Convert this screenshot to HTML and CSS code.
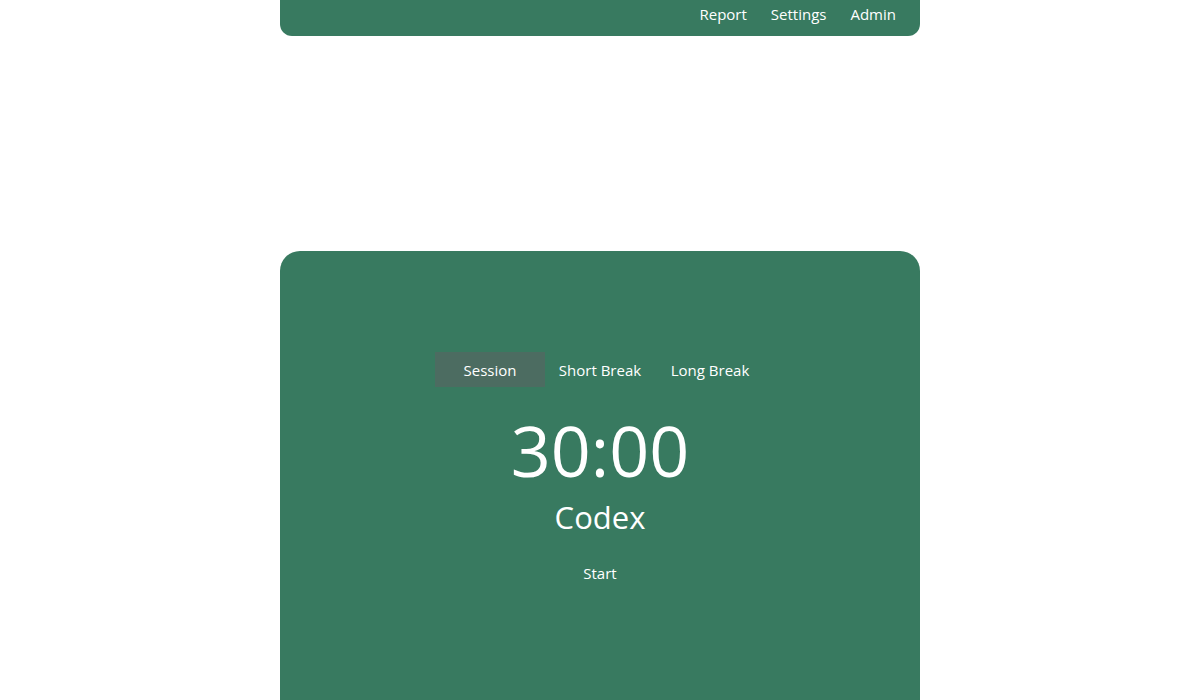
FILE: index.html
```html
<!DOCTYPE html>
<html lang="en">
<head>
<meta charset="utf-8">
<title>Pomodoro</title>
<link rel="stylesheet" href="styles.css">
</head>
<body>
<header class="nav">
  <a class="nav-link" href="#">Report</a>
  <a class="nav-link" href="#">Settings</a>
  <a class="nav-link" href="#">Admin</a>
</header>
<main class="card">
  <div class="tabs">
    <button class="tab active">Session</button>
    <button class="tab">Short Break</button>
    <button class="tab">Long Break</button>
  </div>
  <div class="time">30:00</div>
  <div class="task">Codex</div>
  <button class="start">Start</button>
</main>
</body>
</html>
```
FILE: styles.css
```css
html, body {
  margin: 0;
  padding: 0;
  background: #ffffff;
  font-family: "Open Sans", "Noto Sans", sans-serif;
  color: #ffffff;
  overflow: hidden;
}
.nav {
  width: 640px;
  margin: 0 auto;
  height: 36px;
  box-sizing: border-box;
  background: #387a60;
  border-radius: 0 0 12px 12px;
  display: flex;
  justify-content: flex-end;
  align-items: flex-start;
  gap: 24px;
  padding: 3px 24px 0 0;
}
.nav-link {
  color: #ffffff;
  text-decoration: none;
  font-size: 15px;
  line-height: 22px;
}
.card {
  width: 640px;
  margin: 215px auto 0;
  min-height: 520px;
  background: #387a60;
  border-radius: 20px;
  display: flex;
  flex-direction: column;
  align-items: center;
  padding-top: 101px;
  box-sizing: border-box;
}
.tabs {
  display: flex;
}
.tab {
  width: 110px;
  height: 35px;
  border: none;
  background: transparent;
  color: #ffffff;
  font-family: inherit;
  font-size: 15px;
  padding: 0;
  cursor: pointer;
}
.tab.active {
  background: #4c6c61;
}
.time {
  font-size: 70px;
  line-height: 84px;
  margin-top: 21px;
  font-weight: 400;
}
.task {
  font-size: 31px;
  line-height: 37px;
  margin-top: 7px;
}
.start {
  margin-top: 23px;
  background: transparent;
  border: none;
  color: #ffffff;
  font-family: inherit;
  font-size: 15px;
  padding: 4px 8px;
  cursor: pointer;
}
```
